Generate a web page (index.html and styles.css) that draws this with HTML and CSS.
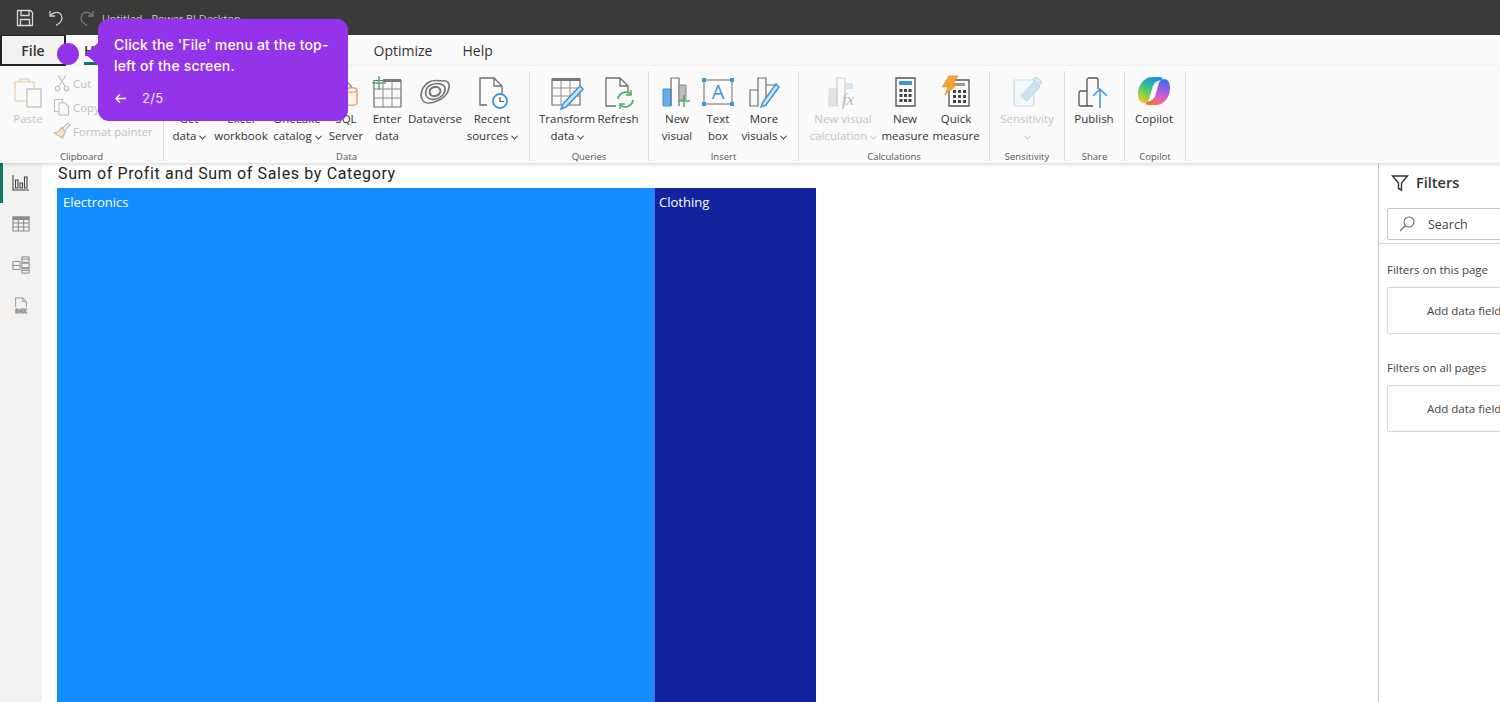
FILE: index.html
```html
<!DOCTYPE html>
<html lang="en">
<head>
<meta charset="utf-8">
<title>Untitled - Power BI Desktop</title>
<link rel="stylesheet" href="styles.css">
</head>
<body>
<div class="app">
  <header class="titlebar">
    <svg class="tb-icon" viewBox="0 0 18 18" fill="none" stroke="#d8d8d8" stroke-width="1.3"><path d="M1.500 1.500h13l2 2v13h-15z"/><path d="M5 1.500v5h8v-5M4.500 16.500v-6h9v6"/></svg>
    <svg class="tb-icon" viewBox="0 0 18 18" fill="none" stroke="#d0d0d0" stroke-width="1.3"><path d="M3 2v5h5"/><path d="M3.500 6.500C6 3.500 10 2.500 13 4.500c3 2.500 2.500 7-.5 9.500L9 16.500"/></svg>
    <svg class="tb-icon dim" viewBox="0 0 18 18" fill="none" stroke="#7a7a7a" stroke-width="1.3"><path d="M15 2v5h-5"/><path d="M14.500 6.500C12 3.500 8 2.500 5 4.500c-3 2.500-2.500 7 .5 9.500L9 16.500"/></svg>
    <span class="doc-title">Untitled - Power BI Desktop</span>
  </header>

  <nav class="tabs">
    <span class="file-tab">File</span>
    <div class="tab-list">
      <span class="tab active">Home</span>
      <span class="tab">Insert</span>
      <span class="tab">Modeling</span>
      <span class="tab">View</span>
      <span class="tab">Optimize</span>
      <span class="tab">Help</span>
    </div>
  </nav>

  <section class="ribbon">
    <div class="group g-clip">
      <div class="items">
        <div class="item off w-paste">
          <svg class="ico" viewBox="0 0 32 32" fill="none"><path d="M3 6h19v19H3z" stroke="#f0d9b5" stroke-width="1.5"/><path d="M8 6V3h9v3" stroke="#d8d8d8" stroke-width="1.500"/><path d="M15 13h14v18H15z" fill="#fafafa" stroke="#c9c9c9" stroke-width="1.500"/></svg>
          <span class="lab">Paste</span>
        </div>
        <div class="mini-col">
          <div class="mini"><svg viewBox="0 0 18 18" fill="none" stroke="#bdbdbd" stroke-width="1.100"><path d="M5 1l7 11M13 1L6 12"/><circle cx="4.500" cy="14.500" r="2.300"/><circle cx="13.500" cy="14.500" r="2.300"/></svg><span>Cut</span></div>
          <div class="mini"><svg viewBox="0 0 18 18" fill="none" stroke="#bdbdbd" stroke-width="1.100"><path d="M1.500 1.500h8v3M1.500 1.500v12h4"/><path d="M6 5h6l3.500 3.500V17H6z"/></svg><span>Copy</span></div>
          <div class="mini"><svg viewBox="0 0 18 18" fill="none" stroke-width="1.200"><path d="M10 6l5-5 2 2-5 5" stroke="#bdbdbd"/><path d="M8.500 5.500l4 4-3 6.500L1 11c3 0 5-1.500 7.500-5.500z" fill="#f4e3c4" stroke="#c9b48f"/></svg><span>Format painter</span></div>
        </div>
      </div>
      <div class="g-name">Clipboard</div>
    </div>

    <div class="group g-data">
      <div class="items">
        <div class="item w44"><svg class="ico" viewBox="0 0 32 32"></svg><span class="lab">Get<br>data<i class="chev"></i></span></div>
        <div class="item w56"><svg class="ico" viewBox="0 0 32 32"></svg><span class="lab">Excel<br>workbook</span></div>
        <div class="item w52"><svg class="ico" viewBox="0 0 32 32"></svg><span class="lab">OneLake<br>catalog<i class="chev"></i></span></div>
        <div class="item w42">
          <svg class="ico" viewBox="0 0 32 32" fill="none"><path d="M2 20V3h12l7 7v4" stroke="#777" stroke-width="1.300"/><path d="M16 14v13c0 3 11 3 11 0V14c0-3-11-3-11 0zM16 14c0 3 11 3 11 0" stroke="#e8a263" stroke-width="1.500" fill="#fdf6ee"/></svg>
          <span class="lab">SQL<br>Server</span>
        </div>
        <div class="item w36">
          <svg class="ico" viewBox="0 0 32 32" fill="none"><path d="M3 4.500h27V31H3z" stroke="#6e6e6e" stroke-width="1.200"/><path d="M12 3h18v3H12z" fill="#777"/><path d="M3 13h27M3 22h27M12 5v26M21 5v26" stroke="#8a8a8a"/><path d="M8 0v14M1 7h14" stroke="#4caf6e" stroke-width="1.500"/></svg>
          <span class="lab">Enter<br>data</span>
        </div>
        <div class="item w56">
          <svg class="ico" viewBox="0 0 32 32" fill="none" stroke="#777" stroke-width="1.600"><path d="M10 6C15 3 21 5 24 5c4-1 7 2 6 7-1 6-6 11-12 13-6 3-13 3-15-2-2-4-1-12 7-17z"/><path d="M8 21c-3-4-1-10 4-12 6-3 13-1 14 3 1 5-4 10-9 11-4 1-7 0-9-2z"/><ellipse cx="16" cy="15.500" rx="5.500" ry="4.500" stroke-width="2.200" transform="rotate(-20 16 15.500)"/></svg>
          <span class="lab">Dataverse</span>
        </div>
        <div class="item w54">
          <svg class="ico" viewBox="0 0 32 32" fill="none"><path d="M11 29H4V2h14l8 8v8M18 2v8h8" stroke="#6e6e6e" stroke-width="1.300"/><circle cx="24" cy="25" r="7" fill="#fff" stroke="#3a96dd" stroke-width="1.800"/><path d="M24 21v4.500h4" stroke="#555" stroke-width="1.200"/></svg>
          <span class="lab">Recent<br>sources<i class="chev"></i></span>
        </div>
      </div>
      <div class="g-name">Data</div>
    </div>

    <div class="group g-query">
      <div class="items">
        <div class="item w56">
          <svg class="ico" viewBox="0 0 32 32" fill="none"><path d="M1 3h28v26H1z" stroke="#6e6e6e" stroke-width="1.200"/><path d="M1 2h28v3H1z" fill="#777"/><path d="M1 12h28M1 20h28M10 5v24M19 5v24" stroke="#9a8e84"/><path d="M12 28l-2 5 5-2L32 13l-3-3z" fill="#cfe6f7" stroke="#3a96dd" stroke-width="1.500"/></svg>
          <span class="lab">Transform<br>data<i class="chev"></i></span>
        </div>
        <div class="item w42">
          <svg class="ico" viewBox="0 0 32 32" fill="none"><path d="M14 30H4V2h14l8 8v6M18 2v8h8" stroke="#6e6e6e" stroke-width="1.300"/><path d="M16 23a8 8 0 0 1 13-5M31 24a8 8 0 0 1-13 5" stroke="#4caf6e" stroke-width="1.800"/><path d="M29 14v5h-5M18 33v-5h5" stroke="#4caf6e" stroke-width="1.500"/></svg>
          <span class="lab">Refresh</span>
        </div>
      </div>
      <div class="g-name">Queries</div>
    </div>

    <div class="group g-insert">
      <div class="items">
        <div class="item w38">
          <svg class="ico" viewBox="0 0 32 32" fill="none"><path d="M2 13h8v17H2z" fill="#66ade8" stroke="#3a96dd"/><path d="M10 30V2h8v28" stroke="#6e6e6e" stroke-width="1.200"/><path d="M18 9h7v15h-7z" fill="#bdbdbd" stroke="#8a8a8a"/><path d="M23 19v12M17 25h12" stroke="#4caf6e" stroke-width="1.500"/></svg>
          <span class="lab">New<br>visual</span>
        </div>
        <div class="item w40">
          <svg class="ico" viewBox="0 0 32 32" fill="none"><path d="M2 4h28v24H2z" stroke="#6e6e6e" stroke-width="1"/><path d="M0 2h4v4H0zM28 2h4v4h-4zM0 26h4v4H0zM28 26h4v4h-4z" fill="#3a96dd"/><text x="16" y="23" text-anchor="middle" class="svg-a">A</text></svg>
          <span class="lab">Text<br>box</span>
        </div>
        <div class="item w48">
          <svg class="ico" viewBox="0 0 32 32" fill="none"><path d="M2 14h8v16H2zM10 30V2h8v28M18 9h8v5" stroke="#6e6e6e" stroke-width="1.200"/><path d="M15 26l-2 5 5-2L31 11l-3-3z" fill="#cfe6f7" stroke="#3a96dd" stroke-width="1.500"/></svg>
          <span class="lab">More<br>visuals<i class="chev"></i></span>
        </div>
      </div>
      <div class="g-name">Insert</div>
    </div>

    <div class="group g-calc">
      <div class="items">
        <div class="item off w66">
          <svg class="ico" viewBox="0 0 32 32" fill="none"><path d="M2 13h8v17H2z" fill="#e4e4e4" stroke="#d8d8d8"/><path d="M10 30V2h8v28" stroke="#d0d0d0" stroke-width="1.200"/><path d="M18 7h8v6h-8z" fill="#cfe3f2"/><text x="21" y="29" text-anchor="middle" class="svg-fx">fx</text></svg>
          <span class="lab">New visual<br>calculation<i class="chev"></i></span>
        </div>
        <div class="item w54">
          <svg class="ico" viewBox="0 0 32 32" fill="none"><path d="M7 2h19v28H7z" stroke="#555" stroke-width="1.300"/><path d="M10 5h13v4H10z" fill="#3a96dd"/><path d="M10.500 13h3v3h-3zM15 13h3v3h-3zM19.500 13h3v3h-3zM10.500 18h3v3h-3zM15 18h3v3h-3zM19.500 18h3v3h-3zM10.500 23h3v3h-3zM15 23h3v3h-3zM19.500 23h3v3h-3z" fill="#444"/></svg>
          <span class="lab">New<br>measure</span>
        </div>
        <div class="item w44">
          <svg class="ico" viewBox="0 0 32 32" fill="none"><path d="M9 4h20v26H9z" stroke="#555" stroke-width="1.300"/><path d="M13 7h12v3H13z" fill="#999"/><path d="M13 14h3v3h-3zM18 14h3v3h-3zM23 14h3v3h-3zM13 19h3v3h-3zM18 19h3v3h-3zM23 19h3v3h-3zM13 24h3v3h-3zM18 24h3v3h-3zM23 24h3v3h-3z" fill="#444"/><path d="M9 0h9l-5 8h5L5 19l3-8H2z" fill="#f2a63a" stroke="#d98a1f" stroke-width=".6"/></svg>
          <span class="lab">Quick<br>measure</span>
        </div>
      </div>
      <div class="g-name">Calculations</div>
    </div>

    <div class="group g-sens">
      <div class="items">
        <div class="item off w60">
          <svg class="ico" viewBox="0 0 32 32" fill="none"><path d="M3 4h20v26H3z" fill="#f2f8fb" stroke="#c9e0ec" stroke-width="1.200"/><path d="M10 20L23 6l6 5-13 14z" fill="#cfe3ee" stroke="#bcd6e4"/><path d="M22 3l4-2 5 5-3 4z" fill="#dbe8ef" stroke="#bcd6e4"/></svg>
          <span class="lab">Sensitivity<br><i class="chev solo"></i></span>
        </div>
      </div>
      <div class="g-name">Sensitivity</div>
    </div>

    <div class="group g-share">
      <div class="items">
        <div class="item w44">
          <svg class="ico" viewBox="0 0 32 32" fill="none"><path d="M3 30c-2 0-2-1-2-2V17c0-1 1-2 2-2h6v15zM9 15V4c0-1 1-2 2-2h7c1 0 2 1 2 2v9M9 30h6" stroke="#555" stroke-width="1.300"/><path d="M22 32V14M15 20l7-7 7 7" stroke="#3a96dd" stroke-width="1.500"/></svg>
          <span class="lab">Publish</span>
        </div>
      </div>
      <div class="g-name">Share</div>
    </div>

    <div class="group g-copilot">
      <div class="items">
        <div class="item w44">
          <svg class="ico" viewBox="0 0 32 32">
            <defs>
              <linearGradient id="cpA" x1="0.700" y1="0" x2="0.300" y2="1"><stop offset="0" stop-color="#1f8fe6"/><stop offset=".45" stop-color="#35c48a"/><stop offset=".75" stop-color="#8fd13f"/><stop offset="1" stop-color="#f5c32c"/></linearGradient>
              <linearGradient id="cpB" x1="0.700" y1="0" x2="0.300" y2="1"><stop offset="0" stop-color="#3b6ff0"/><stop offset=".4" stop-color="#a45be8"/><stop offset=".75" stop-color="#ee5fb0"/><stop offset="1" stop-color="#f5762e"/></linearGradient>
            </defs>
            <path d="M14 1H22C25 1 25 4 22 4.500C18 5 15.500 8 14.500 11L12 20C11 25 9 27 6 27C2 27 0 23 0 18C0 9 6 1 14 1Z" fill="url(#cpA)"/>
            <path d="M18 29H10C7 29 7 26 10 25.500C14 25 16.500 22 17.500 19L20 10C21 5 23 3 26 3C30 3 32 7 32 12C32 21 26 29 18 29Z" fill="url(#cpB)"/>
          </svg>
          <span class="lab">Copilot</span>
        </div>
      </div>
      <div class="g-name">Copilot</div>
    </div>
  </section>

  <main class="workspace">
    <aside class="rail">
      <div class="rail-btn current"><svg viewBox="0 0 18 18" fill="none" stroke="#444" stroke-width="1.100"><path d="M1 1v15h16"/><path d="M3.500 6h2.500v8H3.500zM8 9h2.500v5H8zM12.500 3H15v11h-2.500z"/></svg></div>
      <div class="rail-btn"><svg viewBox="0 0 18 18" fill="none" stroke="#8a8a8a" stroke-width="1.100"><path d="M1 2h16v14H1z"/><path d="M1 2h16v2.500H1z" fill="#8a8a8a"/><path d="M1 8h16M1 12h16M6.300 4v12M11.700 4v12"/></svg></div>
      <div class="rail-btn"><svg viewBox="0 0 20 20" fill="none" stroke="#8a8a8a" stroke-width="1.100"><path d="M1 6h8v9H1zM1 10.500h8M11 1h8v6h-8zM11 3.500h8M11 8h8v5h-8zM11 14h8v5h-8zM11 16h8"/></svg></div>
      <div class="rail-btn"><svg viewBox="0 0 20 20" fill="none" stroke="#9a9a9a" stroke-width="1.100"><path d="M4 11V1h8l4 4v6M12 1v4h4"/><text x="10" y="18" text-anchor="middle" class="svg-dax">DAX</text></svg></div>
    </aside>

    <div class="canvas">
      <h1 class="chart-title">Sum of Profit and Sum of Sales by Category</h1>
      <div class="treemap">
        <div class="cell electronics">Electronics</div>
        <div class="cell clothing">Clothing</div>
      </div>
    </div>

    <aside class="filters">
      <div class="f-head">
        <svg viewBox="0 0 18 18" fill="none" stroke="#333" stroke-width="1.400"><path d="M1.500 2h15l-6 7v7l-3-1.500V9z"/></svg>
        <span>Filters</span>
      </div>
      <div class="f-search">
        <svg viewBox="0 0 18 18" fill="none" stroke="#666" stroke-width="1.100"><circle cx="11" cy="7" r="5"/><path d="M7.500 10.500L2 16"/></svg>
        <span>Search</span>
      </div>
      <div class="f-body">
        <div class="f-label">Filters on this page</div>
        <div class="f-drop">Add data fields here</div>
        <div class="f-label second">Filters on all pages</div>
        <div class="f-drop">Add data fields here</div>
      </div>
    </aside>
  </main>

  <div class="beacon"></div>
  <div class="tip">
    <p>Click the 'File' menu at the top-left of the screen.</p>
    <div class="tip-foot">
      <svg viewBox="0 0 14 12" fill="none" stroke="#fff" stroke-width="1.500"><path d="M13 6H2M6.500 1.500L2 6l4.500 4.500"/></svg>
      <span>2/5</span>
    </div>
  </div>
</div>
</body>
</html>
```

FILE: styles.css
```css
* { box-sizing: border-box; }
html, body { margin: 0; padding: 0; }
body { font-family: "Open Sans", "Noto Sans", sans-serif; color: #333; background: #fff; }

.app { position: relative; width: 1500px; height: 702px; overflow: hidden; display: flex; flex-direction: column; }

/* Title bar */
.titlebar { height: 35px; flex: none; background: #3b3a39; display: flex; align-items: center; padding-left: 16px; gap: 14px; }
.tb-icon { width: 18px; height: 18px; flex: none; }
.tb-icon + .tb-icon { margin-left: -1px; }
.doc-title { color: #c8c6c4; font-size: 10.800px; margin-left: -8px; margin-top: 2px; white-space: nowrap; }

/* Tabs */
.tabs { height: 31px; flex: none; background: #fafafa; display: flex; }
.file-tab { width: 66px; height: 31px; background: #f3f2f1; border: 2px solid #252423; border-top-width: 1px; display: flex; align-items: center; justify-content: center; font-size: 14px; font-weight: 600; color: #333; }
.tab-list { display: flex; gap: 30px; padding-left: 18px; }
.tab { font-size: 14px; line-height: 31px; color: #333; white-space: nowrap; }
.tab.active { font-weight: 600; border-bottom: 3px solid #117865; height: 30px; }

/* Ribbon */
.ribbon { height: 97px; flex: none; background: #fafafa; display: flex; padding-top: 5px; box-shadow: 0 1px 4px rgba(0,0,0,.18); position: relative; z-index: 1; }
.group { flex: none; height: 90px; border-right: 1px solid #e1dfdd; display: flex; flex-direction: column; }
.items { flex: none; display: flex; gap: 2px; height: 78.500px; padding-top: 5px; }
.g-name { flex: none; font-size: 9.500px; line-height: 13px; text-align: center; color: #555; }
.g-clip { width: 164px; }
.g-data { width: 366px; }
.g-data .items { padding-left: 3px; }
.g-query { width: 119px; }
.g-query .items { padding-left: 9px; }
.g-insert { width: 150px; }
.g-insert .items { padding-left: 9px; }
.g-calc { width: 191px; }
.g-calc .items { padding-left: 11px; }
.g-sens { width: 75px; }
.g-sens .items { padding-left: 7px; }
.g-share { width: 60px; }
.g-share .items { padding-left: 7px; }
.g-copilot { width: 61px; }
.g-copilot .items { padding-left: 7px; }

.item { flex: none; display: flex; flex-direction: column; align-items: center; }
.ico { width: 32px; height: 32px; flex: none; display: block; overflow: visible; }
.lab { margin-top: 2px; font-size: 11.500px; line-height: 17px; text-align: center; white-space: nowrap; color: #333; }
.off .lab { color: #c4c4c4; }
.chev { display: inline-block; width: 5px; height: 5px; border-right: 1px solid currentColor; border-bottom: 1px solid currentColor; transform: rotate(45deg) translate(-1px, -1px); margin-left: 4px; }
.chev.solo { margin-left: 0; }

.w36 { width: 36px; } .w38 { width: 38px; } .w40 { width: 40px; } .w42 { width: 42px; }
.w44 { width: 44px; } .w48 { width: 48px; } .w52 { width: 52px; } .w54 { width: 54px; }
.w56 { width: 56px; } .w60 { width: 60px; } .w66 { width: 66px; }
.w-paste { width: 46px; margin-left: 5px; }

.mini-col { display: flex; flex-direction: column; gap: 6px; margin-top: -2px; }
.mini { display: flex; align-items: center; gap: 2px; height: 18px; font-size: 11.400px; color: #c0c0c0; white-space: nowrap; }
.mini svg { width: 18px; height: 18px; flex: none; }

.svg-a { font: 20px "Open Sans", sans-serif; fill: #3a96dd; }
.svg-fx { font: italic 17px "Liberation Serif", serif; fill: #b8b8b8; }
.svg-dax { font: bold 6px "Open Sans", sans-serif; fill: #9a9a9a; }

/* Workspace */
.workspace { flex: 1; min-height: 0; display: flex; }
.rail { width: 42px; flex: none; background: #f3f2f1; display: flex; flex-direction: column; }
.rail-btn { height: 41px; display: flex; align-items: center; justify-content: center; }
.rail-btn svg { width: 18px; height: 18px; }
.rail-btn.current { height: 40px; border-left: 3px solid #117865; padding-right: 3px; }

.canvas { flex: 1; min-width: 0; display: flex; flex-direction: column; padding: 1px 0 0 15px; background: #fff; }
.chart-title { margin: 0 0 0 1px; font: 400 16px/20px Roboto, sans-serif; letter-spacing: .64px; color: #252423; height: 24px; }
.treemap { flex: 1; display: flex; }
.cell { color: #fff; font-size: 13px; padding: 5px 5px; }
.electronics { width: 597px; background: #118dff; padding-left: 6px; }
.clothing { width: 162px; background: #12239e; border-left: 1px solid #4f6fd6; padding-left: 4px; }

/* Filters */
.filters { width: 122px; flex: none; border-left: 1px solid #c8c6c4; overflow: hidden; background: #fff; }
.f-head { display: flex; align-items: center; gap: 7px; padding: 2px 0 0 12px; height: 37px; font-size: 14.500px; font-weight: 600; color: #333; }
.f-head svg { width: 18px; height: 18px; }
.f-search { width: 200px; height: 32px; margin: 8px 0 3px 8px; border: 1px solid #c8c6c4; border-radius: 2px; display: flex; align-items: center; gap: 12px; padding-left: 10px; font-size: 12.500px; color: #444; }
.f-search svg { width: 18px; height: 18px; }
.f-body { border-top: 1px solid #d8d8d8; padding: 18px 0 0 8px; }
.f-label { font-size: 11.500px; line-height: 16px; color: #444; white-space: nowrap; }
.f-label.second { margin-top: 26px; }
.f-drop { width: 200px; height: 47px; margin-top: 9px; border: 1px solid #d8d8d8; border-radius: 2px; padding-left: 39px; font-size: 11.500px; line-height: 45px; color: #444; white-space: nowrap; }

/* Guided tour overlay */
.beacon { position: absolute; left: 57px; top: 43px; width: 22px; height: 22px; border-radius: 50%; background: #9333ea; z-index: 3; }
.tip { position: absolute; left: 98px; top: 19px; width: 250px; height: 102px; border-radius: 11px; background: #9333ea; color: #fff; padding: 15px 16px 0; z-index: 3; font-family: Inter, "Open Sans", sans-serif; }
.tip::before { content: ""; position: absolute; left: -13px; top: 24px; border-style: solid; border-width: 11px 13px 11px 0; border-color: transparent #9333ea transparent transparent; }
.tip p { margin: 0; font-size: 14px; line-height: 21px; font-weight: 500; letter-spacing: .17px; }
.tip-foot { display: flex; align-items: center; gap: 15px; margin-top: 14px; font-size: 13px; color: #f0e4fb; letter-spacing: .3px; }
.tip-foot svg { width: 13px; height: 11px; }
```
